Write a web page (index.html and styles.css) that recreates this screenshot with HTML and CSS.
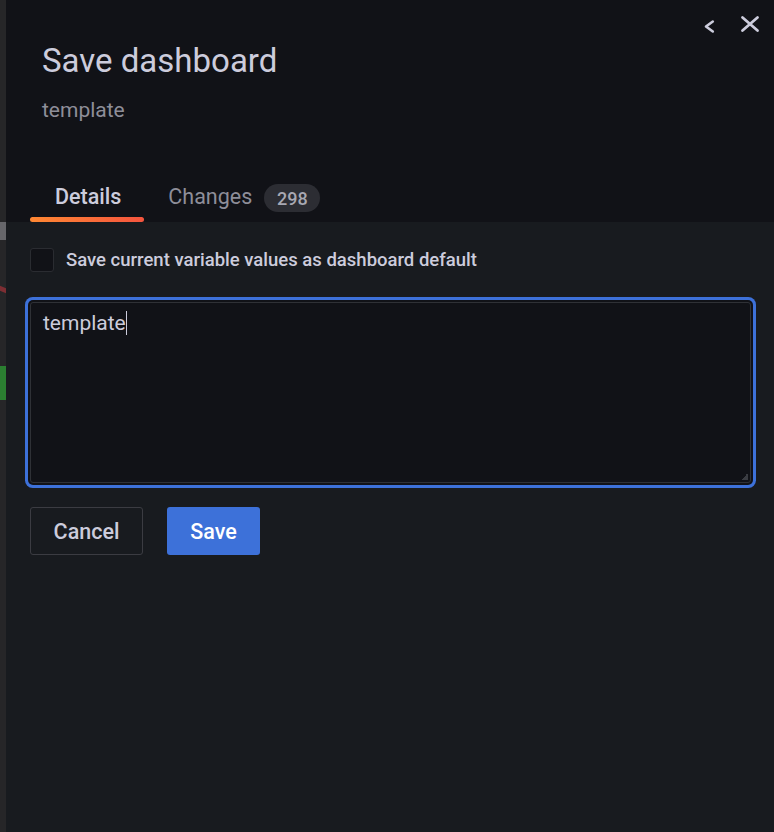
FILE: index.html
```html
<!DOCTYPE html>
<html>
<head>
<meta charset="utf-8">
<link rel="stylesheet" href="styles.css">
</head>
<body>
<div class="page">
  <div class="backdrop">
    <span class="mark mark-white"></span>
    <span class="mark mark-red"></span>
    <span class="mark mark-green"></span>
  </div>
  <div class="drawer">
    <div class="drawer-header">
      <div class="drawer-actions">
        <button class="icon-btn icon-collapse" aria-label="Collapse">
          <svg width="14" height="16" viewBox="0 0 14 16"><path d="M10.8 3.5 L4 8.5 L10.8 13.5" fill="none" stroke="#ccccdc" stroke-width="2.6" stroke-linecap="round" stroke-linejoin="round"/></svg>
        </button>
        <button class="icon-btn" aria-label="Close">
          <svg width="20" height="18" viewBox="0 0 20 18"><path d="M2.5 2.5 L17.5 15.5 M17.5 2.5 L2.5 15.5" fill="none" stroke="#ccccdc" stroke-width="2.8" stroke-linecap="round"/></svg>
        </button>
      </div>
      <div class="title-block">
        <h1 class="title">Save dashboard</h1>
        <div class="subtitle">template</div>
      </div>
      <div class="tabs">
        <div class="tab active">Details</div>
        <div class="tab">Changes <span class="badge">298</span></div>
      </div>
    </div>
    <div class="drawer-body">
      <label class="check-row">
        <span class="checkbox"></span>
        <span class="check-label">Save current variable values as dashboard default</span>
      </label>
      <div class="textarea">template<span class="caret"></span><span class="resize"></span></div>
      <div class="buttons">
        <button class="btn btn-secondary">Cancel</button>
        <button class="btn btn-primary">Save</button>
      </div>
    </div>
  </div>
</div>
</body>
</html>
```
FILE: styles.css
```css
* { box-sizing: border-box; }
html, body {
  margin: 0;
  padding: 0;
  background: #181b1f;
  font-family: Roboto, "Liberation Sans", sans-serif;
  color: #ccccdc;
}
.page {
  display: flex;
  width: 774px;
  height: 832px;
  overflow: hidden;
}
.backdrop {
  width: 6px;
  flex: none;
  background: #262628;
  position: relative;
}
.mark { position: absolute; left: 0; width: 6px; }
.mark-white { top: 222px; height: 18px; background: #77777b; opacity: 0.8; }
.mark-red { top: 287px; height: 5px; background: #7d2e33; transform: skewY(22deg); }
.mark-green { top: 366px; height: 34px; background: #2b7f31; }
.drawer {
  flex: 1;
  display: flex;
  flex-direction: column;
  background: #181b1f;
}
.drawer-header {
  background: #111217;
  position: relative;
  padding: 0 24px;
  height: 222px;
  display: flex;
  flex-direction: column;
}
.drawer-actions {
  position: absolute;
  top: 15px;
  left: 696px;
  display: flex;
  gap: 24px;
  align-items: flex-start;
}
.icon-btn {
  background: none;
  border: 0;
  padding: 0;
  display: flex;
  align-items: center;
  justify-content: center;
}
.icon-collapse { margin-top: 3px; }
.title-block {
  padding: 41px 12px 0;
}
.title {
  margin: 0;
  font-size: 33px;
  font-weight: 400;
  line-height: 40px;
  color: #ccccdc;
}
.subtitle {
  margin-top: 17px;
  font-size: 21px;
  line-height: 24px;
  color: #8e8e99;
}
.tabs {
  margin-top: auto;
  display: flex;
  height: 54px;
}
.tab {
  position: relative;
  display: flex;
  align-items: flex-start;
  padding: 16px 24px 0;
  font-size: 21.5px;
  line-height: 25px;
  font-weight: 400;
  color: #8e8e99;
  gap: 12px;
}
.tab.active {
  color: #ccccdc;
  font-weight: 500;
  padding: 16px 23px 0 25px;
}
.tab.active::after {
  content: "";
  position: absolute;
  left: 0;
  right: 0;
  bottom: 0;
  height: 5px;
  border-radius: 3px;
  background: linear-gradient(90deg, #ff8833, #f5553e);
}
.badge {
  display: inline-flex;
  align-items: center;
  justify-content: center;
  height: 28px;
  width: 56px;
  border-radius: 14px;
  background: #2c2d33;
  color: #a8a8b2;
  font-size: 18px;
  font-weight: 500;
}
.drawer-body {
  padding: 26px 23px 24px 24px;
  display: flex;
  flex-direction: column;
}
.check-row {
  display: flex;
  align-items: center;
  gap: 12px;
  height: 24px;
}
.checkbox {
  width: 24px;
  height: 24px;
  border: 1px solid #2a2c31;
  border-radius: 3px;
  background: #111217;
}
.check-label {
  font-size: 18.5px;
  line-height: 22px;
  font-weight: 500;
  color: #ccccdc;
}
.textarea {
  margin-top: 30px;
  height: 181px;
  position: relative;
  border: 1px solid #2f3136;
  border-radius: 3px;
  background: #111217;
  padding: 8px 12px;
  font-size: 21px;
  line-height: 24px;
  color: #ccccdc;
  box-shadow: 0 0 0 2px #111217, 0 0 0 5px #3d71d9;
}
.caret {
  display: inline-block;
  width: 1px;
  height: 24px;
  background: #ccccdc;
  vertical-align: top;
}
.resize {
  position: absolute;
  right: 2px;
  bottom: 2px;
  width: 7px;
  height: 7px;
  background: linear-gradient(135deg, transparent 50%, #3a3c42 50%);
}
.buttons {
  margin-top: 24px;
  display: flex;
  gap: 24px;
}
.btn {
  height: 48px;
  border-radius: 3px;
  font-family: Roboto, "Liberation Sans", sans-serif;
  font-size: 21.5px;
  font-weight: 500;
  padding: 0;
}
.btn-secondary {
  width: 113px;
  background: transparent;
  border: 1px solid #3b3c42;
  color: #ccccdc;
}
.btn-primary {
  width: 93px;
  background: #3d71d9;
  border: 0;
  color: #ffffff;
}
```
